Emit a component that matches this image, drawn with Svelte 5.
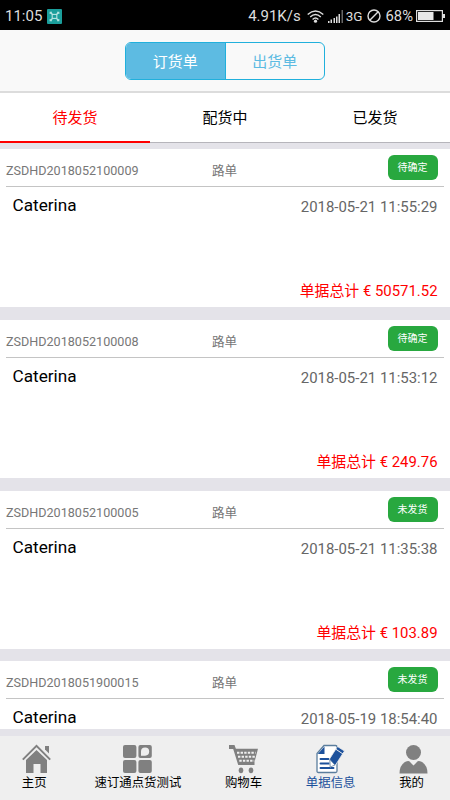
<script>
	let mode = $state("order");
	let status = $state(0);
	let page = $state("bills");

	const statuses = ["待发货", "配货中", "已发货"];

	const bills = [
		{ no: "ZSDHD2018052100009", state: "待确定", time: "2018-05-21 11:55:29", total: "50571.52" },
		{ no: "ZSDHD2018052100008", state: "待确定", time: "2018-05-21 11:53:12", total: "249.76" },
		{ no: "ZSDHD2018052100005", state: "未发货", time: "2018-05-21 11:35:38", total: "103.89" },
		{ no: "ZSDHD2018051900015", state: "未发货", time: "2018-05-19 18:54:40" },
	];

	const pages = [
		{ id: "home", label: "主页" },
		{ id: "test", label: "速订通点货测试" },
		{ id: "cart", label: "购物车" },
		{ id: "bills", label: "单据信息" },
		{ id: "me", label: "我的" },
	];
</script>

<div class="app">
	<div class="statusbar">
		<span class="clock">11:05</span>
		<svg class="shot" width="15" height="15" viewBox="0 0 15 15">
			<rect width="15" height="15" rx="1" fill="#1b9e9b" />
			<g fill="none" stroke="#b9e4e2" stroke-width="1.1">
				<path d="M3.2 5V3.2H5M10 3.2h1.8V5M11.8 10v1.8H10M5 11.8H3.2V10" />
				<rect x="5.2" y="5.4" width="4.6" height="4" />
				<path d="M3.5 3.5l2 2M11.5 3.5l-2 2M3.5 11.5l2-2M11.5 11.5l-2-2" />
			</g>
		</svg>
		<span class="speed">4.91K/s</span>
		<svg class="wifi" width="17" height="13" viewBox="0 0 17 13">
			<g fill="none" stroke="#ddd" stroke-width="1.4">
				<path d="M.7 4.5Q8.5-2.5 16.3 4.5M3.2 7Q8.5 2 13.8 7M5.6 9.4Q8.5 6.8 11.4 9.4" />
			</g>
			<circle cx="8.5" cy="11.2" r="1.6" fill="#ddd" />
		</svg>
		<svg class="signal" width="15" height="13" viewBox="0 0 15 13">
			<path d="M0 11h1.5v2H0zM2.5 9.5H4V13H2.5zM5.5 8H7v5H5.5zM8 6.5h1.5V13H8zM10.5 4H12v9h-1.5z" fill="#ddd" />
			<path d="M13.5 0H15v13h-1.5z" fill="#666" />
		</svg>
		<span class="net">3G</span>
		<svg class="none" width="14" height="14" viewBox="0 0 14 14">
			<circle cx="7" cy="7" r="6" fill="none" stroke="#ddd" stroke-width="1.4" />
			<path d="M11.2 2.8l-8.4 8.4" stroke="#ddd" stroke-width="1.4" />
		</svg>
		<span class="percent">68%</span>
		<svg class="battery" width="29" height="12" viewBox="0 0 29 12">
			<rect x=".6" y=".6" width="25.8" height="10.8" fill="none" stroke="#ddd" stroke-width="1.2" />
			<rect x="2" y="2" width="15.5" height="8" fill="#e8e8e8" />
			<rect x="27" y="4" width="2" height="4" fill="#ddd" />
		</svg>
	</div>

	<header>
		<div class="segment">
			<button class:on={mode === "order"} onclick={() => (mode = "order")}>订货单</button>
			<button class:on={mode === "out"} onclick={() => (mode = "out")}>出货单</button>
		</div>
	</header>

	<nav class="tabs">
		{#each statuses as name, i}
			<button class:active={status === i} onclick={() => (status = i)}>{name}</button>
		{/each}
	</nav>

	<main>
		{#each bills as bill (bill.no)}
			<section class="card">
				<div class="top">
					<span class="no">{bill.no}</span>
					<span class="kind">路单</span>
					<span class="badge">{bill.state}</span>
				</div>
				<div class="info">
					<span class="customer">Caterina</span>
					<span class="time">{bill.time}</span>
				</div>
				{#if bill.total}
					<div class="total">单据总计 € {bill.total}</div>
				{/if}
			</section>
		{/each}
	</main>

	<footer>
		{#each pages as item (item.id)}
			<button class:current={page === item.id} onclick={() => (page = item.id)}>
				<svg width="29" height="30" viewBox="0 0 29 30">
					{#if item.id === "home"}
						<path d="M.8 15.6L14.5 1.8l13.7 13.8" fill="none" stroke="#808080" stroke-width="2" />
						<path d="M23 2h4v7.5l-4-4z" fill="#808080" />
						<path d="M4 16L14.5 6 25 16v13h-6.5v-9h-7v9H4z" fill="#808080" />
					{:else if item.id === "test"}
						<g fill="#808080">
							<rect x="0" y="1" width="13.4" height="13" rx="2" />
							<rect x="0" y="16" width="13.4" height="13" rx="2" />
							<rect x="15.4" y="16" width="13.4" height="13" rx="2" />
							<rect x="15.4" y="1" width="13.4" height="13" rx="2" />
						</g>
						<path d="M18 11.7V7.6a4.1 4.1 0 1 1 4.1 4.1z" fill="#efefef" />
					{:else if item.id === "cart"}
						<path d="M0 1h5.5l1.4 3.7H29L25.5 18v3H9.2L4.2 5H0z" fill="#808080" />
						<path d="M8 8.7h18.5M9 12.7h17M10.3 16.7h15" stroke="#efefef" stroke-width="2" stroke-dasharray="2.4 1.2" />
						<ellipse cx="12" cy="26.3" rx="2.3" ry="2.9" fill="#808080" />
						<ellipse cx="22" cy="26.3" rx="2.3" ry="2.9" fill="#808080" />
					{:else if item.id === "bills"}
						<path d="M8 1.5h11.5q1.5 0 1.5 1.5v24q0 1.5-1.5 1.5H2.5Q1 28.5 1 27V9.5z" fill="#fff" stroke="#5b7e9d" stroke-width="1.3" />
						<path d="M1.8 10L8.5 2.5V10z" fill="#1c519c" />
						<path d="M4.5 15h8M4.5 19.5h9M4.5 24h13" stroke="#1c519c" stroke-width="1.9" stroke-linecap="round" />
						<path d="M21.5 2.5l7 4.5-9 14-5.5 2-.5-8z" fill="#1c519c" stroke="#efefef" stroke-width=".8" />
						<path d="M13.9 15.5l5 5.5-4.7 2z" fill="#fff" stroke="#5b7e9d" stroke-width=".7" />
						<path d="M19.5 5l7.5 5" stroke="#efefef" stroke-width="1" />
					{:else}
						<circle cx="14.5" cy="8.5" r="7.5" fill="#808080" />
						<path d="M.5 29.5q0-8.8 6.500-12 2-1 3.300-.2l4.200 4.200 4.200-4.200q1.300-.8 3.300.2 6.500 3.200 6.500 12z" fill="#808080" />
					{/if}
				</svg>
				<span>{item.label}</span>
			</button>
		{/each}
	</footer>
</div>

<style>
	:global(body) {
		overflow: hidden;
	}

	.app {
		display: flex;
		flex-direction: column;
		width: 450px;
		height: 800px;
		background: #e4e3e9;
		font-family: Roboto, "Noto Sans CJK SC", sans-serif;
		color: #000;
	}

	button {
		border: 0;
		padding: 0;
		background: none;
		font: inherit;
		color: inherit;
	}

	svg {
		display: block;
		flex: none;
	}

	.statusbar {
		display: flex;
		align-items: center;
		flex: none;
		height: 30px;
		padding: 2px 5px 0;
		box-sizing: border-box;
		background: #000;
		color: #ddd;
		font-size: 15px;
		line-height: 28px;
		white-space: nowrap;
	}

	.clock {
		width: 37px;
	}

	.shot {
		margin-left: 5px;
	}

	.speed {
		margin-left: auto;
	}

	.wifi {
		margin-left: 6px;
	}

	.signal {
		margin-left: 4px;
	}

	.net {
		margin-left: 3px;
		font-size: 13.5px;
	}

	.none {
		margin-left: 4px;
	}

	.percent {
		margin-left: 5px;
		font-size: 14.8px;
	}

	.battery {
		margin-left: 3px;
	}

	header {
		flex: none;
		display: flex;
		justify-content: center;
		height: 63px;
		padding-top: 12px;
		box-sizing: border-box;
		background: #f9f9f9;
		border-bottom: 2px solid #dcdcdc;
	}

	.segment {
		display: flex;
		width: 200px;
		height: 38px;
		box-sizing: border-box;
		border: 1px solid #21b0dc;
		border-radius: 6px;
		overflow: hidden;
		font-size: 15px;
		color: #5dbbe2;
	}

	.segment button {
		flex: 1;
		padding-bottom: 1px;
	}

	.segment .on {
		background: #5dbbe2;
		color: #fff;
	}

	.segment button + button {
		border-left: 1px solid #21b0dc;
	}

	.tabs {
		flex: none;
		display: flex;
		height: 50px;
		background: #fff;
		font-size: 15px;
	}

	.tabs button {
		flex: 1;
		padding-bottom: 2px;
		border-bottom: 1px solid #b6b5bb;
	}

	.tabs .active {
		padding-bottom: 1px;
		color: #f00;
		border-bottom: 2px solid #f00;
	}

	main {
		flex: 1;
		min-height: 0;
		overflow: hidden;
		margin: 6px 0 7px;
	}

	.card {
		height: 158px;
		margin-bottom: 12.8px;
		padding: 0 6px;
		box-sizing: border-box;
		background: #fff;
	}

	.top {
		display: flex;
		height: 38px;
		box-sizing: border-box;
		border-bottom: 1px solid #c4c4c4;
		font-size: 12.6px;
		line-height: 43px;
		color: #777;
	}

	.no {
		width: 206px;
	}

	.badge {
		width: 50px;
		height: 25px;
		margin: 6px 6.5px 0 auto;
		border-radius: 6px;
		background: #28a83f;
		color: #fff;
		font-size: 10px;
		line-height: 25px;
		text-align: center;
	}

	.info {
		display: flex;
		justify-content: space-between;
		height: 86px;
		padding: 0 6.5px;
		line-height: 37px;
	}

	.customer {
		font-size: 17.2px;
	}

	.time {
		font-size: 14.95px;
		line-height: 40px;
		color: #666;
	}

	.total {
		padding-right: 6.5px;
		text-align: right;
		font-size: 14.9px;
		line-height: 37px;
		color: #f00;
	}

	footer {
		flex: none;
		display: flex;
		justify-content: space-around;
		height: 64px;
		padding-top: 8px;
		box-sizing: border-box;
		background: #efefef;
	}

	footer button {
		display: flex;
		flex-direction: column;
		align-items: center;
		font-size: 12.4px;
		white-space: nowrap;
	}

	footer span {
		align-self: flex-start;
		line-height: 18px;
	}

	.current {
		color: #1c519c;
	}
</style>
